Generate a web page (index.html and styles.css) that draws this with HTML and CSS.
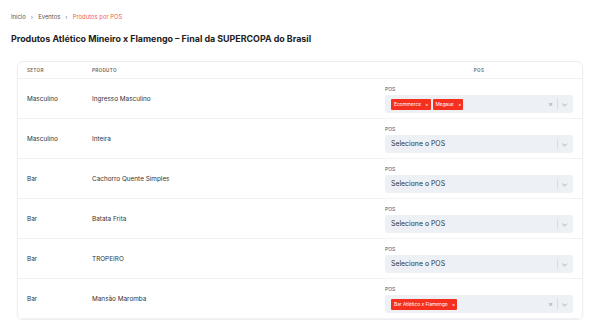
FILE: index.html
```html
<!DOCTYPE html>
<html lang="pt-BR">
<head>
    <meta charset="UTF-8">
    <meta name="viewport" content="width=device-width, initial-scale=1.0">
    <title>Produtos por POS</title>
    <link rel="stylesheet" href="styles.css">
</head>
<body>
    <div class="page">
        <nav class="breadcrumb">
            <a href="#">Início</a>
            <span class="sep">›</span>
            <a href="#">Eventos</a>
            <span class="sep">›</span>
            <span class="current">Produtos por POS</span>
        </nav>

        <h1>Produtos Atlético Mineiro x Flamengo – Final da SUPERCOPA do Brasil</h1>

        <div class="card">
            <table>
                <thead>
                    <tr>
                        <th class="col-setor">Setor</th>
                        <th class="col-produto">Produto</th>
                        <th class="col-pos">POS</th>
                    </tr>
                </thead>
                <tbody>
                    <tr>
                        <td>Masculino</td>
                        <td>Ingresso Masculino</td>
                        <td class="pos-cell">
                            <label>POS</label>
                            <div class="select">
                                <div class="tags">
                                    <span class="tag">Ecommerce <b>×</b></span>
                                    <span class="tag">Megaue <b>×</b></span>
                                </div>
                                <span class="clear">×</span>
                                <span class="divider"></span>
                                <span class="arrow"><svg width="7" height="7" viewBox="0 0 10 10"><path d="M2 4l3 3 3-3" fill="none" stroke="currentColor" stroke-width="1.3"/></svg></span>
                            </div>
                        </td>
                    </tr>
                    <tr>
                        <td>Masculino</td>
                        <td>Inteira</td>
                        <td class="pos-cell">
                            <label>POS</label>
                            <div class="select">
                                <span class="placeholder">Selecione o POS</span>
                                <span class="divider"></span>
                                <span class="arrow"><svg width="7" height="7" viewBox="0 0 10 10"><path d="M2 4l3 3 3-3" fill="none" stroke="currentColor" stroke-width="1.3"/></svg></span>
                            </div>
                        </td>
                    </tr>
                    <tr>
                        <td>Bar</td>
                        <td>Cachorro Quente Simples</td>
                        <td class="pos-cell">
                            <label>POS</label>
                            <div class="select">
                                <span class="placeholder">Selecione o POS</span>
                                <span class="divider"></span>
                                <span class="arrow"><svg width="7" height="7" viewBox="0 0 10 10"><path d="M2 4l3 3 3-3" fill="none" stroke="currentColor" stroke-width="1.3"/></svg></span>
                            </div>
                        </td>
                    </tr>
                    <tr>
                        <td>Bar</td>
                        <td>Batata Frita</td>
                        <td class="pos-cell">
                            <label>POS</label>
                            <div class="select">
                                <span class="placeholder">Selecione o POS</span>
                                <span class="divider"></span>
                                <span class="arrow"><svg width="7" height="7" viewBox="0 0 10 10"><path d="M2 4l3 3 3-3" fill="none" stroke="currentColor" stroke-width="1.3"/></svg></span>
                            </div>
                        </td>
                    </tr>
                    <tr>
                        <td>Bar</td>
                        <td>TROPEIRO</td>
                        <td class="pos-cell">
                            <label>POS</label>
                            <div class="select">
                                <span class="placeholder">Selecione o POS</span>
                                <span class="divider"></span>
                                <span class="arrow"><svg width="7" height="7" viewBox="0 0 10 10"><path d="M2 4l3 3 3-3" fill="none" stroke="currentColor" stroke-width="1.3"/></svg></span>
                            </div>
                        </td>
                    </tr>
                    <tr>
                        <td>Bar</td>
                        <td>Mansão Maromba</td>
                        <td class="pos-cell">
                            <label>POS</label>
                            <div class="select">
                                <div class="tags">
                                    <span class="tag">Bar Atlético x Flamengo <b>×</b></span>
                                </div>
                                <span class="clear">×</span>
                                <span class="divider"></span>
                                <span class="arrow"><svg width="7" height="7" viewBox="0 0 10 10"><path d="M2 4l3 3 3-3" fill="none" stroke="currentColor" stroke-width="1.3"/></svg></span>
                            </div>
                        </td>
                    </tr>
                </tbody>
            </table>
        </div>
    </div>
</body>
</html>
```

FILE: styles.css
```css
body {
    font-family: Inter, "Noto Sans", sans-serif;
    background-color: white;
    margin: 0;
    color: #222;
}

.page {
    padding: 11px 17px 0 11px;
}

.breadcrumb {
    font-size: 5.9px;
    color: #555;
    display: flex;
    align-items: center;
    gap: 5px;
    height: 10px;
}

.breadcrumb a {
    color: #555;
    text-decoration: none;
}

.breadcrumb .sep {
    font-size: 6px;
    color: #777;
}

.breadcrumb .current {
    color: #f2604f;
}

h1 {
    font-size: 8.9px;
    font-weight: 700;
    color: #222;
    margin: 12px 0 16px;
    line-height: 12px;
}

.card {
    margin-left: 6px;
    border: 1px solid #eceef1;
    border-radius: 6px;
    box-shadow: 0 1px 3px rgba(0, 0, 0, 0.04);
    overflow: hidden;
}

table {
    width: 100%;
    border-collapse: collapse;
    table-layout: fixed;
}

th {
    font-size: 4.6px;
    font-weight: 600;
    text-transform: uppercase;
    letter-spacing: 0.3px;
    color: #666;
    text-align: left;
    height: 16px;
    padding: 0 9px;
    border-bottom: 1px solid #f1f2f4;
}

th.col-setor {
    width: 47px;
}

th.col-pos {
    width: 188px;
    text-align: center;
}

td {
    font-size: 6.4px;
    line-height: 8px;
    color: #333;
    padding: 0 9px;
    height: 39px;
    border-bottom: 1px solid #f1f2f4;
}

td.pos-cell {
    vertical-align: top;
}

label {
    display: block;
    font-size: 5px;
    line-height: 6px;
    color: #555;
    margin: 7px 0 3px;
}

.select {
    display: flex;
    align-items: center;
    background-color: #edf1f5;
    border-radius: 3px;
    height: 18px;
    padding: 0 5px 0 6px;
}

.tags {
    flex: 1;
    display: flex;
    gap: 2px;
}

.tag {
    background-color: #f5301f;
    color: white;
    font-size: 4.8px;
    padding: 2px 2px 2px 3px;
    line-height: 7px;
    border-radius: 1px;
}

.tag b {
    font-weight: 400;
    margin-left: 3px;
}

.placeholder {
    flex: 1;
    font-size: 6.9px;
    color: #333;
}

.clear {
    color: #9aa0a6;
    font-size: 7px;
    margin-right: 4px;
}

.divider {
    width: 1px;
    height: 10px;
    background-color: #d8dce0;
    margin-right: 3px;
}

.arrow {
    color: #9aa0a6;
    display: flex;
    align-items: center;
}
```
